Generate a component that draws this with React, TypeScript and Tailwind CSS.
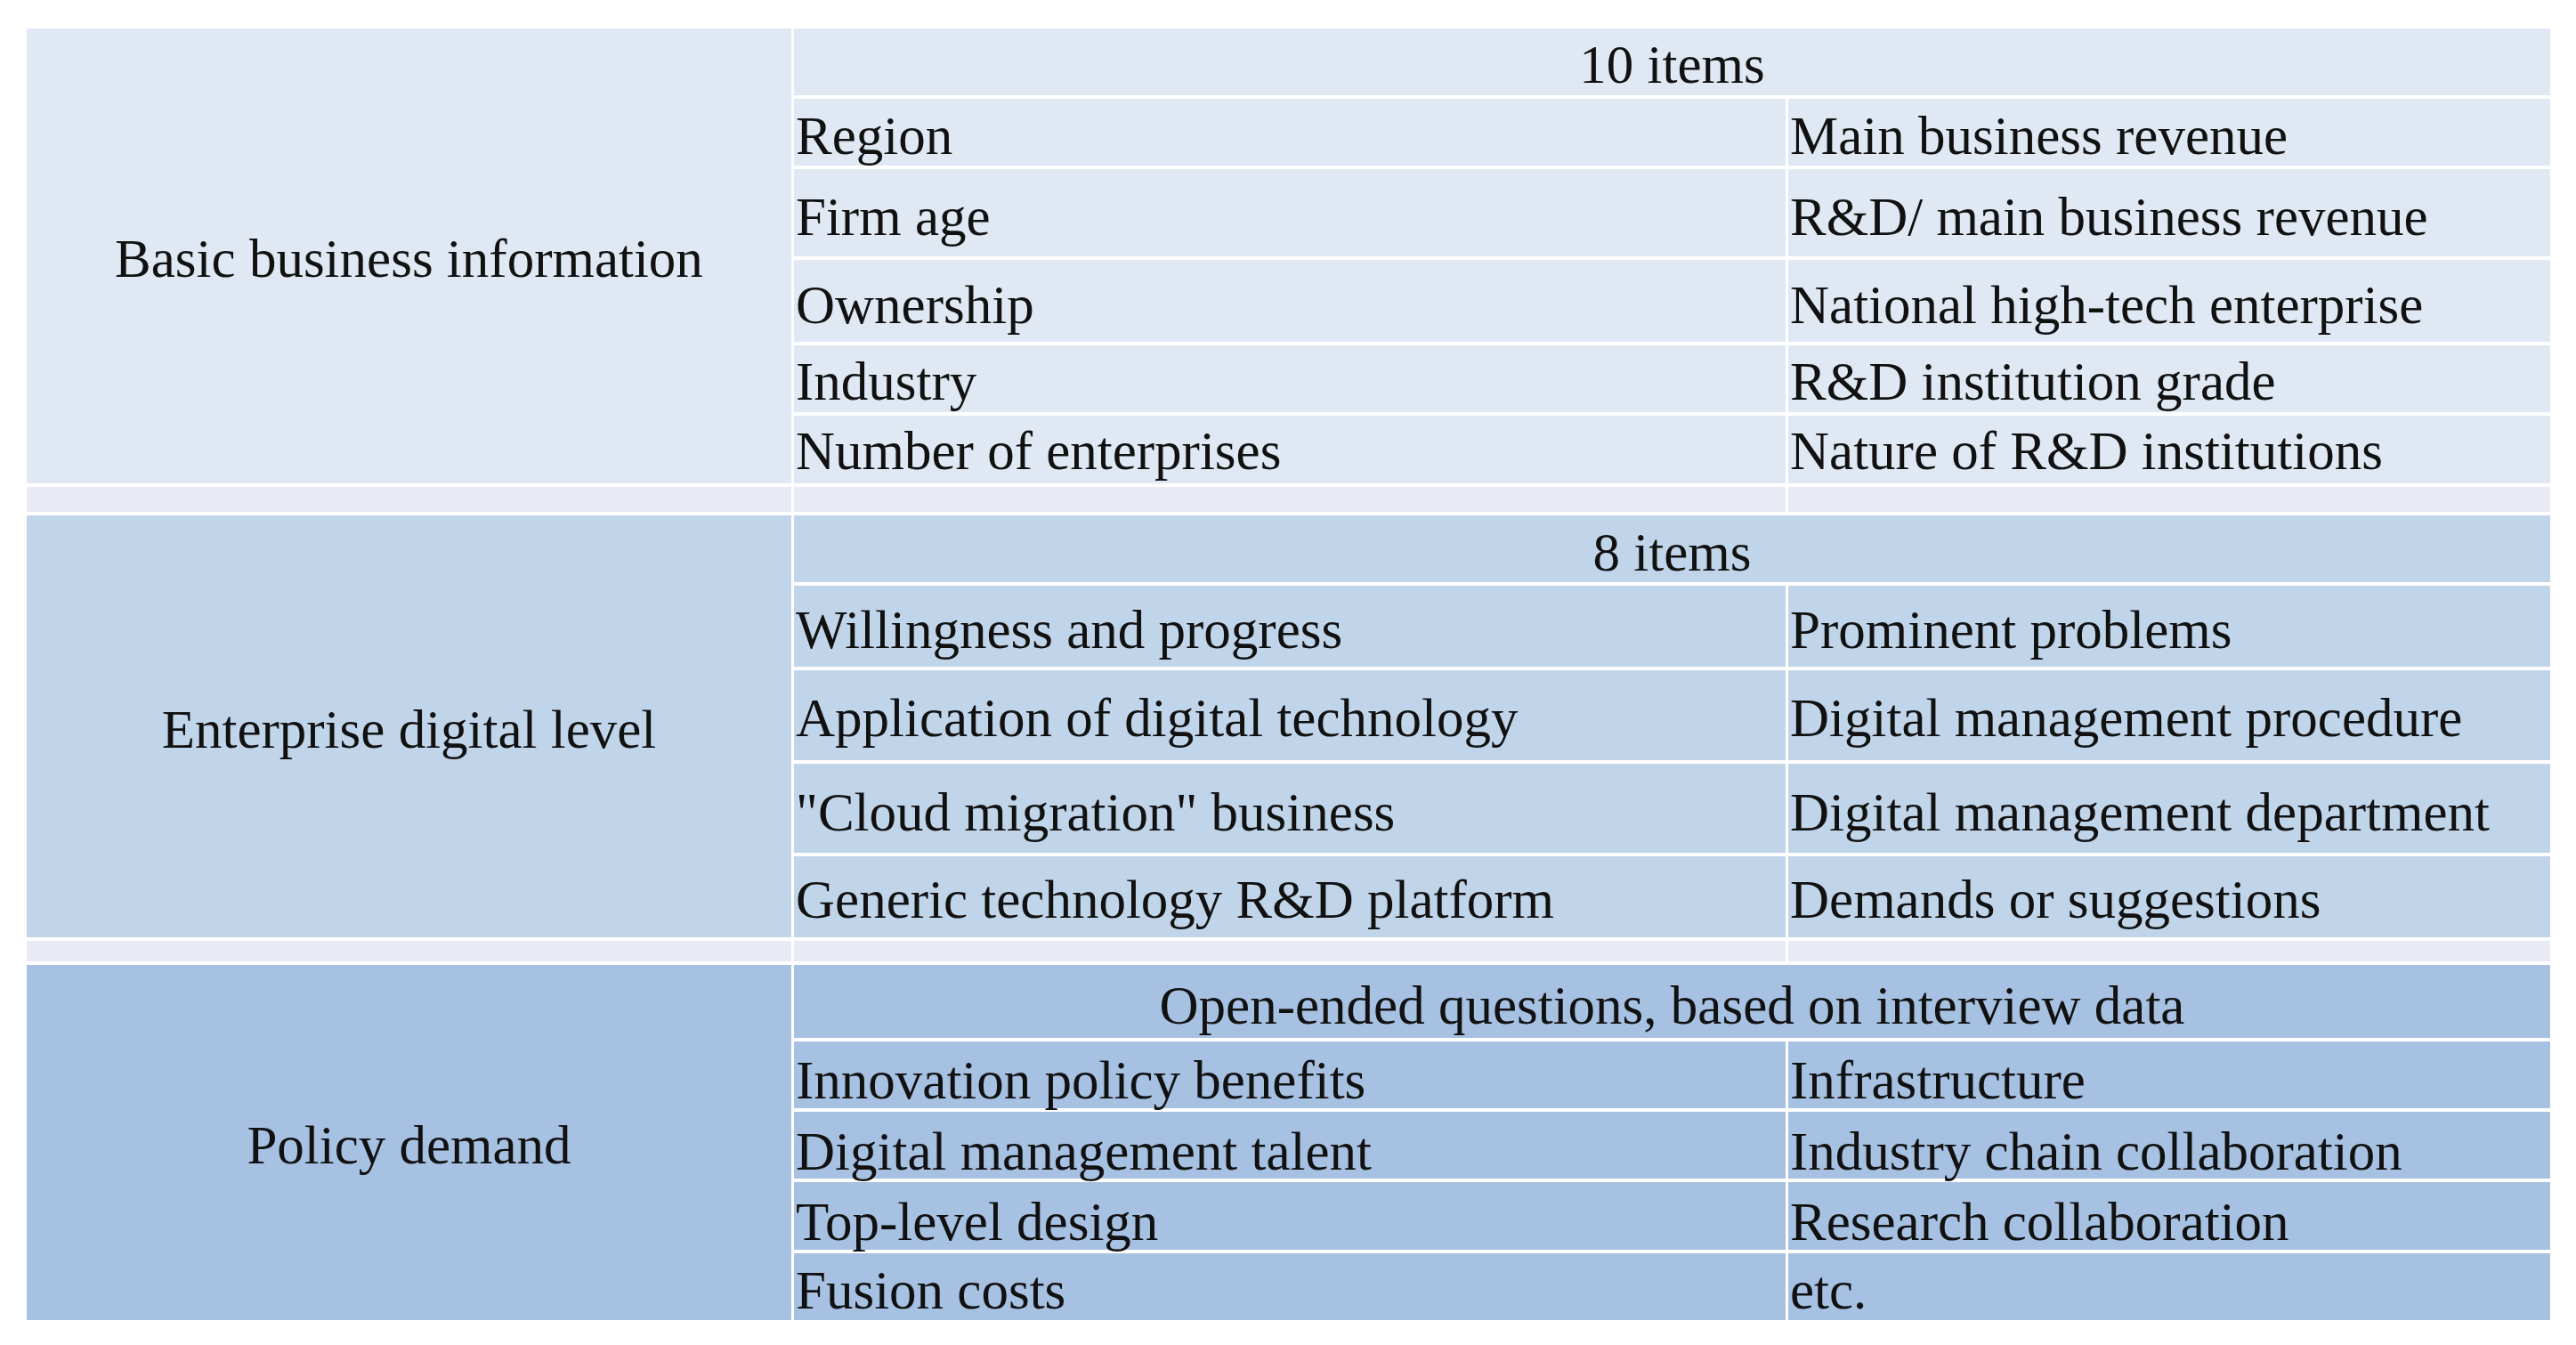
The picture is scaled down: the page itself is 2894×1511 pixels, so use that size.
import React from "react";

type Row = { left: string; right: string; h: string; pb: string };

type Section = {
  label: string;
  header: string;
  bg: string;
  headerH: string;
  headerPb: string;
  rowSpan: string;
  rows: Row[];
  spacer?: string;
};

const SECTIONS: Section[] = [
  {
    label: "Basic business information",
    header: "10 items",
    bg: "bg-[#dfe8f3]",
    headerH: "h-[75px]",
    headerPb: "pb-[4px]",
    rowSpan: "row-span-6",
    rows: [
      { left: "Region", right: "Main business revenue", h: "h-[75px]", pb: "pb-[3px]" },
      { left: "Firm age", right: "R&D/ main business revenue", h: "h-[98px]", pb: "pb-[14px]" },
      { left: "Ownership", right: "National high-tech enterprise", h: "h-[92px]", pb: "pb-[11px]" },
      { left: "Industry", right: "R&D institution grade", h: "h-[75px]", pb: "pb-[4px]" },
      { left: "Number of enterprises", right: "Nature of R&D institutions", h: "h-[76px]", pb: "pb-[6px]" },
    ],
    spacer: "h-[28px]",
  },
  {
    label: "Enterprise digital level",
    header: "8 items",
    bg: "bg-[#c1d5ea]",
    headerH: "h-[75px]",
    headerPb: "pb-[3px]",
    rowSpan: "row-span-5",
    rows: [
      { left: "Willingness and progress", right: "Prominent problems", h: "h-[91px]", pb: "pb-[11px]" },
      { left: "Application of digital technology", right: "Digital management procedure", h: "h-[101px]", pb: "pb-[17px]" },
      { left: "\"Cloud migration\" business", right: "Digital management department", h: "h-[100px]", pb: "pb-[15px]" },
      { left: "Generic technology R&D platform", right: "Demands or suggestions", h: "h-[91px]", pb: "pb-[12px]" },
    ],
    spacer: "h-[23px]",
  },
  {
    label: "Policy demand",
    header: "Open-ended questions, based on interview data",
    bg: "bg-[#a6c1e2]",
    headerH: "h-[82px]",
    headerPb: "pb-[6px]",
    rowSpan: "row-span-5",
    rows: [
      { left: "Innovation policy benefits", right: "Infrastructure", h: "h-[75px]", pb: "pb-[1px]" },
      { left: "Digital management talent", right: "Industry chain collaboration", h: "h-[75px]", pb: "pb-[0px]" },
      { left: "Top-level design", right: "Research collaboration", h: "h-[76px]", pb: "pb-[1px]" },
      { left: "Fusion costs", right: "etc.", h: "h-[75px]", pb: "pb-[3px]" },
    ],
  },
];

function Cell({ text, bg, h, pb }: { text: string; bg: string; h: string; pb: string }) {
  return (
    <div className={`${bg} ${h} ${pb} flex items-end pl-[2px] whitespace-nowrap`}>
      <span>{text}</span>
    </div>
  );
}

export default function App() {
  return (
    <div className="min-h-screen bg-white pt-[32px] pl-[30px] text-[61px] leading-[61px] text-[#111111] font-['Liberation_Serif',serif]">
      <div className="grid w-[2835px] grid-cols-[859px_1114px_856px] gap-x-[3px] gap-y-[4px] bg-white">
        {SECTIONS.map((s) => (
          <React.Fragment key={s.label}>
            <div className={`${s.bg} ${s.rowSpan} flex items-center justify-center pt-[6px] whitespace-nowrap`}>
              {s.label}
            </div>
            <div className={`${s.bg} ${s.headerH} ${s.headerPb} col-span-2 flex items-end justify-center whitespace-nowrap`}>
              {s.header}
            </div>
            {s.rows.map((r) => (
              <React.Fragment key={r.left}>
                <Cell text={r.left} bg={s.bg} h={r.h} pb={r.pb} />
                <Cell text={r.right} bg={s.bg} h={r.h} pb={r.pb} />
              </React.Fragment>
            ))}
            {s.spacer && (
              <>
                <div className={`bg-[#e8ebf4] ${s.spacer}`} />
                <div className={`bg-[#e8ebf4] ${s.spacer}`} />
                <div className={`bg-[#e8ebf4] ${s.spacer}`} />
              </>
            )}
          </React.Fragment>
        ))}
      </div>
    </div>
  );
}
